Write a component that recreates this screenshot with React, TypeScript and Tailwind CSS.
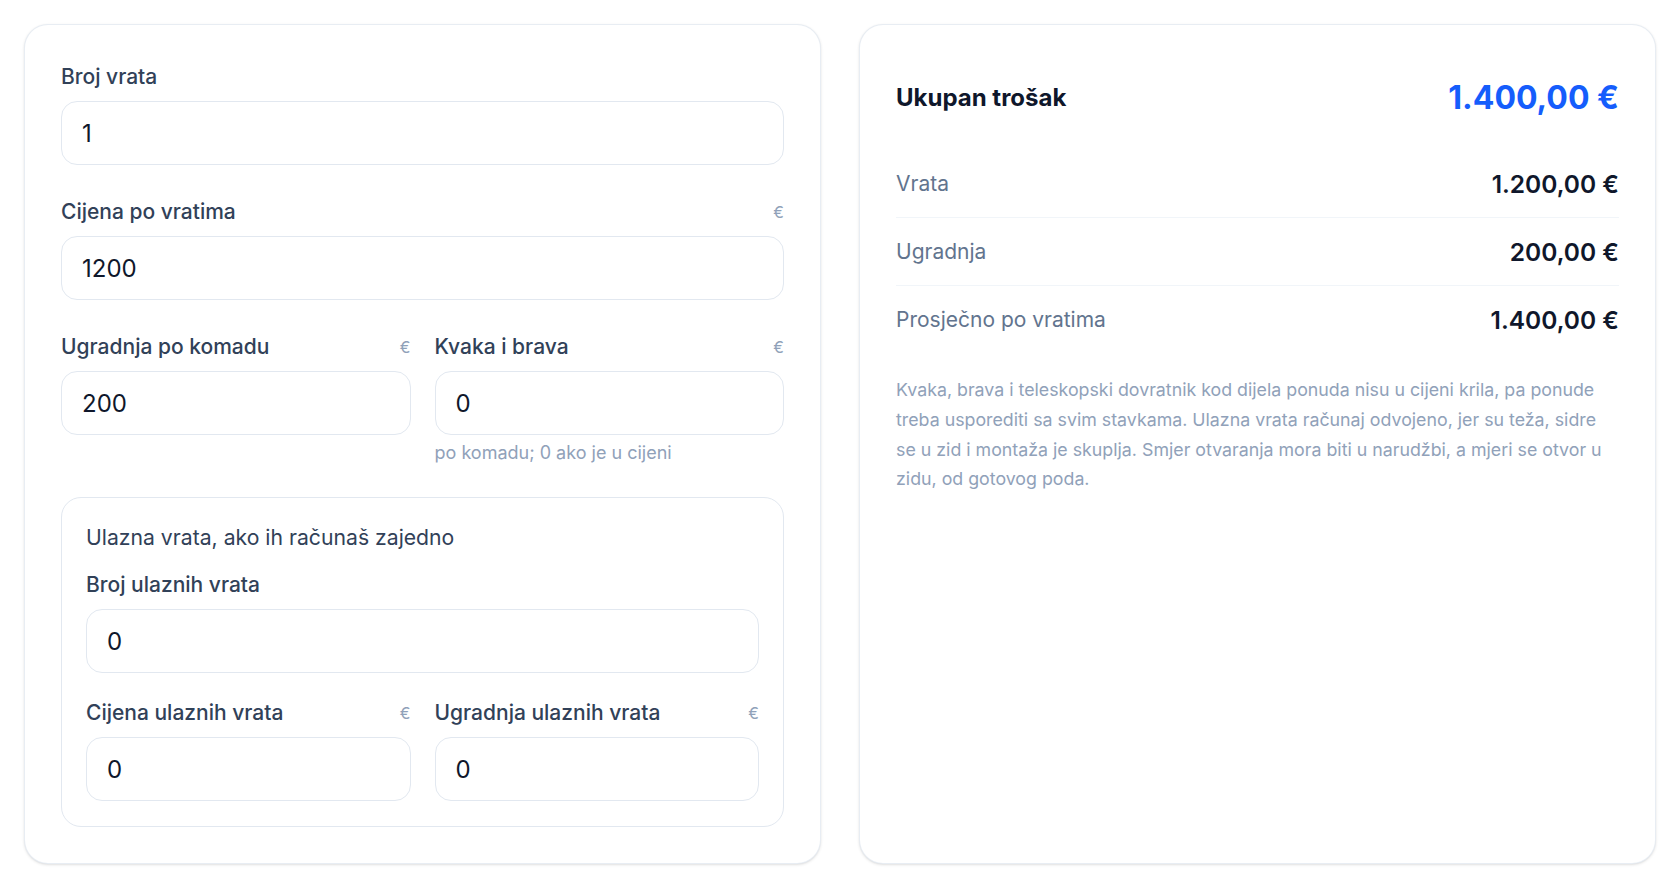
import React, { useState } from 'react';

function toNum(s: string) {
  const n = parseFloat(s.replace(',', '.'));
  return Number.isFinite(n) ? n : 0;
}

function formatEur(n: number) {
  const [int, dec] = Math.abs(n).toFixed(2).split('.');
  const grouped = int.replace(/\B(?=(\d{3})+(?!\d))/g, '.');
  return (n < 0 ? '-' : '') + grouped + ',' + dec + '\u00a0€';
}

interface FieldProps {
  label: string;
  value: string;
  onChange: (v: string) => void;
  euro?: boolean;
  hint?: string;
}

function Field({ label, value, onChange, euro, hint }: FieldProps) {
  return (
    <div>
      <div className="mb-[9px] flex items-center justify-between">
        <label className="text-[21px] font-medium leading-[30px] text-slate-700">{label}</label>
        {euro && <span className="text-base text-slate-400">€</span>}
      </div>
      <input
        type="text"
        inputMode="decimal"
        value={value}
        onChange={(e) => onChange(e.target.value)}
        className="h-16 w-full rounded-2xl border border-slate-200 bg-white px-5 text-2xl text-slate-900 outline-none focus:border-blue-400"
      />
      {hint && <p className="mt-[6px] text-[18px] leading-6 text-slate-400">{hint}</p>}
    </div>
  );
}

function SummaryRow({ label, value, last }: { label: string; value: string; last?: boolean }) {
  return (
    <div
      className={`flex items-center justify-between ${last ? 'h-[67px]' : 'h-[68px] border-b border-slate-100'}`}
    >
      <span className="text-[21px] leading-7 text-slate-500">{label}</span>
      <span className="text-[24.5px] font-semibold leading-8 text-slate-900">{value}</span>
    </div>
  );
}

export default function App() {
  const [form, setForm] = useState({
    doors: '1',
    price: '1200',
    install: '200',
    handle: '0',
    entryDoors: '0',
    entryPrice: '0',
    entryInstall: '0',
  });

  const set = (key: keyof typeof form) => (v: string) => setForm({ ...form, [key]: v });

  const doors = toNum(form.doors);
  const entryDoors = toNum(form.entryDoors);
  const doorCost = doors * toNum(form.price) + entryDoors * toNum(form.entryPrice);
  const installCost = doors * toNum(form.install) + entryDoors * toNum(form.entryInstall);
  const handleCost = doors * toNum(form.handle);
  const total = doorCost + installCost + handleCost;
  const count = doors + entryDoors;
  const average = count > 0 ? total / count : 0;

  return (
    <div className="min-h-screen bg-white p-6 font-['Inter',sans-serif]">
      <div className="grid grid-cols-2 gap-[38px]">
        <section className="rounded-3xl border border-slate-200/80 bg-white px-9 pt-[37px] pb-9 shadow-sm">
          <div className="flex flex-col gap-8">
            <Field label="Broj vrata" value={form.doors} onChange={set('doors')} />
            <Field label="Cijena po vratima" value={form.price} onChange={set('price')} euro />
            <div className="grid grid-cols-2 gap-6">
              <Field label="Ugradnja po komadu" value={form.install} onChange={set('install')} euro />
              <Field
                label="Kvaka i brava"
                value={form.handle}
                onChange={set('handle')}
                euro
                hint="po komadu; 0 ako je u cijeni"
              />
            </div>
            <div className="rounded-[20px] border border-slate-200 px-6 pt-6 pb-[25px]">
              <p className="text-[21.2px] leading-[30px] text-slate-700">Ulazna vrata, ako ih računaš zajedno</p>
              <div className="mt-[18px]">
                <Field label="Broj ulaznih vrata" value={form.entryDoors} onChange={set('entryDoors')} />
              </div>
              <div className="mt-[25px] grid grid-cols-2 gap-6">
                <Field label="Cijena ulaznih vrata" value={form.entryPrice} onChange={set('entryPrice')} euro />
                <Field
                  label="Ugradnja ulaznih vrata"
                  value={form.entryInstall}
                  onChange={set('entryInstall')}
                  euro
                />
              </div>
            </div>
          </div>
        </section>

        <section className="rounded-3xl border border-slate-200/80 bg-white p-9 shadow-sm">
          <div className="flex items-center justify-between pt-[17px] pb-[15px]">
            <h2 className="text-2xl font-bold leading-8 text-slate-900">Ukupan trošak</h2>
            <span className="text-[32px] font-bold leading-10 text-blue-600">{formatEur(total)}</span>
          </div>
          <div className="mt-[17px]">
            <SummaryRow label="Vrata" value={formatEur(doorCost)} />
            {handleCost > 0 && <SummaryRow label="Kvaka i brava" value={formatEur(handleCost)} />}
            <SummaryRow label="Ugradnja" value={formatEur(installCost)} />
            <SummaryRow label="Prosječno po vratima" value={formatEur(average)} last />
          </div>
          <p className="mt-[22px] text-[17.8px] leading-[29.8px] text-slate-400">
            Kvaka, brava i teleskopski dovratnik kod dijela ponuda nisu u cijeni krila, pa ponude treba usporediti sa
            svim stavkama. Ulazna vrata računaj odvojeno, jer su teža, sidre se u zid i montaža je skuplja. Smjer
            otvaranja mora biti u narudžbi, a mjeri se otvor u zidu, od gotovog poda.
          </p>
        </section>
      </div>
    </div>
  );
}
